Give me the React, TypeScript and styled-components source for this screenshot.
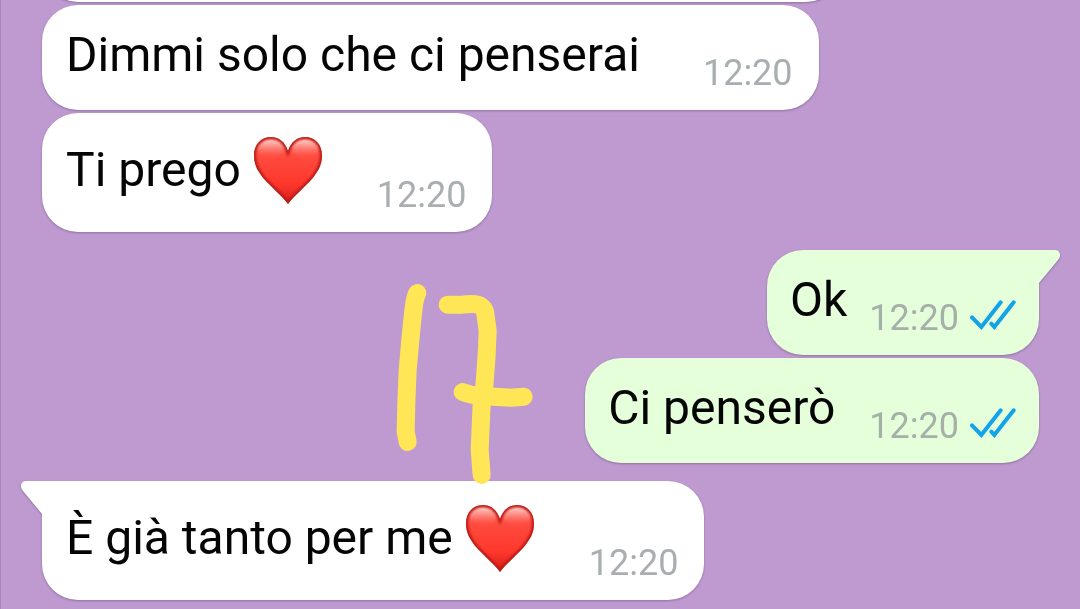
import React from "react";
import styled, { createGlobalStyle } from "styled-components";

const GlobalStyle = createGlobalStyle`
  html, body, #root { height: 100%; }
  body {
    margin: 0;
    background: #be9ad0;
    font-family: Roboto, "Liberation Sans", sans-serif;
    overflow: hidden;
  }
`;

type Side = "in" | "out";

const Thread = styled.main`
  position: relative;
  box-sizing: border-box;
  min-height: 100%;
  display: flex;
  flex-direction: column;
  gap: 18px;
  padding: 0 41px;
  border-left: 1px solid #a488ba;
`;

const Group = styled.section<{ $side: Side }>`
  display: flex;
  flex-direction: column;
  align-items: ${(p) => (p.$side === "in" ? "flex-start" : "flex-end")};
  gap: 3px;
`;

const Bubble = styled.article<{ $side: Side; $tail?: boolean; $gap: number }>`
  position: relative;
  display: flex;
  align-items: flex-end;
  gap: ${(p) => p.$gap}px;
  padding: ${(p) => (p.$side === "in" ? "22px 26px 16px 24px" : "22px 23px 16px 23px")};
  border-radius: 36px;
  ${(p) => p.$tail && (p.$side === "in" ? "border-top-left-radius: 0;" : "border-top-right-radius: 0;")}
  background: ${(p) => (p.$side === "in" ? "#ffffff" : "#e5ffdb")};
  color: ${(p) => (p.$side === "in" ? "#ffffff" : "#e5ffdb")};
  filter: drop-shadow(0 1px 1px rgba(70, 50, 90, 0.4));
`;

const EarlierBubble = styled.div`
  box-sizing: border-box;
  width: 800px;
  max-width: 100%;
  height: 105px;
  margin-top: -103px;
  border-radius: 36px;
  background: #ffffff;
  filter: drop-shadow(0 1px 1px rgba(70, 50, 90, 0.4));
`;

const Tail = styled.svg<{ $side: Side }>`
  position: absolute;
  top: 0;
  ${(p) => (p.$side === "in" ? "right: 100%; transform: scaleX(-1);" : "left: 100%;")}
  width: 21px;
  height: 34px;
  fill: currentColor;
`;

const Message = styled.p`
  display: flex;
  align-items: center;
  gap: 12px;
  margin: 0 0 11px;
  color: #050505;
  font-size: 48px;
  line-height: 56px;
  white-space: nowrap;
`;

const Meta = styled.div`
  display: flex;
  align-items: baseline;
  gap: 11px;
`;

const Stamp = styled.time<{ $side: Side }>`
  color: ${(p) => (p.$side === "in" ? "#a9aeb1" : "#a5b0a8")};
  font-size: 36px;
  line-height: 42px;
`;

const TickIcon = styled.svg`
  width: 46px;
  height: 30px;
  fill: none;
  stroke: #12a3e8;
  stroke-width: 12;
  stroke-linecap: round;
`;

const HeartIcon = styled.svg`
  width: 70px;
  height: 70px;
`;

const Scribble = styled.svg`
  position: absolute;
  top: 270px;
  left: 379px;
  width: 240px;
  height: 240px;
  fill: none;
  stroke: #ffe657;
  stroke-width: 54;
  stroke-linecap: round;
  stroke-linejoin: round;
  pointer-events: none;
`;

const HEART =
  "M35 69C33 66 30 63 25.500 58.500L12.500 45.500C5 37 1 30 1 20.500C1 9 8.500 2 18 2C26 2 32 7 35 16C38 7 44 2 52 2C61.500 2 69 9 69 20.500C69 30 65 37 57.500 45.500L44.500 58.500C40 63 37 66 35 69Z";

function Heart({ id }: { id: string }) {
  return (
    <HeartIcon viewBox="0 0 70 70" role="img" aria-label="heart">
      <defs>
        <linearGradient id={`${id}-fill`} x1="0" y1="0" x2="0" y2="1">
          <stop offset="0" stopColor="#f9655a" />
          <stop offset="0.3" stopColor="#ff4a3e" />
          <stop offset="0.7" stopColor="#fe372b" />
          <stop offset="1" stopColor="#d0201a" />
        </linearGradient>
        <linearGradient id={`${id}-shine`} x1="0" y1="0" x2="0" y2="1">
          <stop offset="0" stopColor="#ffd9d5" stopOpacity="1" />
          <stop offset="1" stopColor="#ff7a70" stopOpacity="0" />
        </linearGradient>
        <filter id={`${id}-soft`} x="-20%" y="-20%" width="140%" height="140%">
          <feGaussianBlur stdDeviation="1" />
        </filter>
        <clipPath id={`${id}-clip`}>
          <path d={HEART} />
        </clipPath>
      </defs>
      <path d={HEART} fill={`url(#${id}-fill)`} />
      <g clipPath={`url(#${id}-clip)`}>
        <ellipse cx="18" cy="13" rx="14" ry="9" fill={`url(#${id}-shine)`} filter={`url(#${id}-soft)`} />
        <ellipse cx="52" cy="13" rx="14" ry="9" fill={`url(#${id}-shine)`} filter={`url(#${id}-soft)`} />
        <path d={HEART} fill="none" stroke="#b81a14" strokeWidth="4" filter={`url(#${id}-soft)`} />
      </g>
    </HeartIcon>
  );
}

interface ChatMessageProps {
  side: Side;
  text: string;
  gap: number;
  tail?: boolean;
  heart?: string;
}

function ChatMessage({ side, text, gap, tail, heart }: ChatMessageProps) {
  return (
    <Bubble $side={side} $tail={tail} $gap={gap}>
      {tail && (
        <Tail $side={side} viewBox="0 0 21 34" aria-hidden="true">
          <path d="M-1 0H16Q20 0 21 4Q21.500 7 19 10L0 33H-1Z" />
        </Tail>
      )}
      <Message>
        {text}
        {heart && <Heart id={heart} />}
      </Message>
      <Meta>
        <Stamp $side={side} dateTime="12:20">12:20</Stamp>
        {side === "out" && (
          <TickIcon viewBox="30 180 138 90" role="img" aria-label="Read">
            <path d="M36 232L64 261L122 187" />
            <path d="M94 251L103 261L161 187" />
          </TickIcon>
        )}
      </Meta>
    </Bubble>
  );
}

export default function App() {
  return (
    <>
      <GlobalStyle />
      <Thread>
        <Group $side="in">
          <EarlierBubble />
          <ChatMessage side="in" text="Dimmi solo che ci penserai" gap={63} />
          <ChatMessage side="in" text="Ti prego" heart="plea" gap={54} />
        </Group>
        <Group $side="out">
          <ChatMessage side="out" text="Ok" tail gap={22} />
          <ChatMessage side="out" text="Ci penserò" gap={34} />
        </Group>
        <Group $side="in">
          <ChatMessage side="in" text="È già tanto per me" heart="thanks" tail gap={54} />
        </Group>
        <Scribble viewBox="0 0 720 720" role="img" aria-label="Handwritten 17">
          <path d="M112 69C102 88 103 105 99 130L91 210L83 300L79 400L77 485L83 516" />
          <path d="M203 104L247 104Q290 98 302 108Q315 118 316 130L323 183L320 255L313 350L305 400L299 540L305 615" />
          <path d="M248 366Q272 376 302 378L392 383L431 380" />
        </Scribble>
      </Thread>
    </>
  );
}
